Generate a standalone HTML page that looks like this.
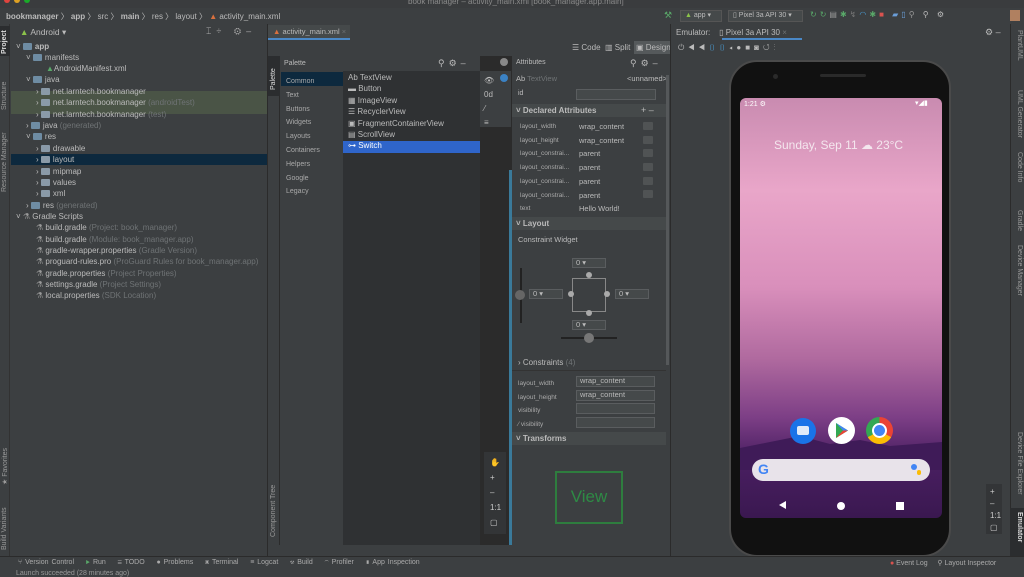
<!DOCTYPE html>
<html><head><meta charset="utf-8"><style>
*{margin:0;padding:0;box-sizing:border-box}
body{width:1024px;height:576px;overflow:hidden;background:#3c3f41;font-family:"Liberation Sans",sans-serif;font-size:8px;color:#bbbbbb;position:relative}
.a{position:absolute;white-space:nowrap}
.row{position:absolute;height:11px;line-height:11px;white-space:nowrap}
.fold{display:inline-block;width:9px;height:7px;background:#6e8ca3;border-radius:1px;vertical-align:-1px;margin-right:3px}
.g{color:#6f7375}
.vt{position:absolute;transform:rotate(-90deg);transform-origin:left top;white-space:nowrap;font-size:7px;color:#9a9a9a}
.vtr{position:absolute;transform:rotate(90deg);transform-origin:left top;white-space:nowrap;font-size:7px;color:#9a9a9a}
.dd{position:absolute;height:10px;border:1px solid #5a5d5f;background:#45494a;font-size:7.5px;line-height:8px;padding-left:3px}
.ar{position:absolute;width:10px;height:8px;background:#505354;border-radius:1px}
</style></head><body>
<!-- title -->
<div class="a" style="left:0;top:0;width:1024px;height:8px;background:#3a3c3e"></div>
<div class="a" style="left:408;left:408px;top:-3px;font-size:8px;color:#8a8a8a">book manager – activity_main.xml [book_manager.app.main]</div>
<div class="a" style="left:4px;top:-3px;width:6px;height:6px;border-radius:3px;background:#e0443e"></div>
<div class="a" style="left:14px;top:-3px;width:6px;height:6px;border-radius:3px;background:#dea123"></div>
<div class="a" style="left:24px;top:-3px;width:6px;height:6px;border-radius:3px;background:#1aab29"></div>
<!-- breadcrumb -->
<div class="a" style="left:6px;top:11px;font-size:8px;color:#bbb"><b>bookmanager</b> 〉 <b>app</b> 〉 src 〉 <b>main</b> 〉 res 〉 layout 〉 <span style="color:#d9703e">▲</span> activity_main.xml</div>
<!-- top right toolbar -->
<div class="a" style="left:664px;top:10px;color:#59a869;font-size:9px">⚒</div>
<div class="a" style="left:680px;top:10px;width:42px;height:12px;border:1px solid #555;background:#45494a;font-size:7px;line-height:10px;padding-left:4px"><span style="color:#8bc34a">▲</span> app ▾</div>
<div class="a" style="left:728px;top:10px;width:75px;height:12px;border:1px solid #555;background:#45494a;font-size:7px;line-height:10px;padding-left:4px">▯ Pixel 3a API 30 ▾</div>
<div class="a" style="left:810px;top:10px;font-size:8px;letter-spacing:3px"><span style="color:#59a869">↻↻</span><span style="color:#999">▤</span><span style="color:#59a869">✱</span><span style="color:#777">↯</span><span style="color:#4a9ed8">◠</span><span style="color:#59a869">✱</span><span style="color:#d9534f">■</span> <span style="color:#6a9ed8">▰▯</span><span style="color:#999">⚲</span> <span style="color:#bbb">⚲ ⚙</span></div>
<div class="a" style="left:1010px;top:10px;width:10px;height:11px;background:#b08060"></div>
<!-- left strip -->
<div class="a" style="left:0;top:24px;width:10px;height:532px;background:#3c3f41;border-right:1px solid #323232"></div>
<div class="a" style="left:0;top:26px;width:10px;height:30px;background:#2b2d2f"></div>
<div class="vt" style="left:1px;top:54px;color:#ddd;font-weight:bold">Project</div>
<div class="vt" style="left:1px;top:110px">Structure</div>
<div class="vt" style="left:1px;top:192px">Resource Manager</div>
<div class="vt" style="left:1px;top:485px">★ Favorites</div>
<div class="vt" style="left:1px;top:550px">Build Variants</div>
<!-- project panel -->
<div class="a" style="left:11px;top:24px;width:256px;height:532px;background:#3c3f41"></div>
<div class="a" style="left:20px;top:27px;font-size:8.5px;color:#bbb"><span style="color:#8bc34a">▲</span> Android ▾</div>
<div class="a" style="left:206px;top:26px;font-size:9px;color:#aaa;letter-spacing:5px">⌶÷ ⚙–</div>
<div class="a" style="left:11px;top:91px;width:256px;height:23px;background:#4a5446"></div>
<div class="a" style="left:11px;top:154px;width:256px;height:11px;background:#0d293e"></div>
<div class="row" style="left:16px;top:41px">˅ <span class="fold"></span><b>app</b></div>
<div class="row" style="left:26px;top:52px">˅ <span class="fold"></span>manifests</div>
<div class="row" style="left:46px;top:63px"><span style="color:#59a869">▲</span>AndroidManifest.xml</div>
<div class="row" style="left:26px;top:74px">˅ <span class="fold"></span>java</div>
<div class="row" style="left:36px;top:86px">› <span class="fold" style="background:#8a9aa8"></span>net.larntech.bookmanager</div>
<div class="row" style="left:36px;top:97px">› <span class="fold" style="background:#8a9aa8"></span>net.larntech.bookmanager <span class="g">(androidTest)</span></div>
<div class="row" style="left:36px;top:109px">› <span class="fold" style="background:#8a9aa8"></span>net.larntech.bookmanager <span class="g">(test)</span></div>
<div class="row" style="left:26px;top:120px">› <span class="fold"></span>java <span class="g">(generated)</span></div>
<div class="row" style="left:26px;top:131px">˅ <span class="fold"></span>res</div>
<div class="row" style="left:36px;top:143px">› <span class="fold" style="background:#8a9aa8"></span>drawable</div>
<div class="row" style="left:36px;top:154px">› <span class="fold" style="background:#8a9aa8"></span>layout</div>
<div class="row" style="left:36px;top:166px">› <span class="fold" style="background:#8a9aa8"></span>mipmap</div>
<div class="row" style="left:36px;top:177px">› <span class="fold" style="background:#8a9aa8"></span>values</div>
<div class="row" style="left:36px;top:188px">› <span class="fold" style="background:#8a9aa8"></span>xml</div>
<div class="row" style="left:26px;top:200px">› <span class="fold"></span>res <span class="g">(generated)</span></div>
<div class="row" style="left:16px;top:211px">˅ <span style="color:#999">⚗</span> Gradle Scripts</div>
<div class="row" style="left:36px;top:222px"><span style="color:#999">⚗</span> build.gradle <span class="g">(Project: book_manager)</span></div>
<div class="row" style="left:36px;top:234px"><span style="color:#999">⚗</span> build.gradle <span class="g">(Module: book_manager.app)</span></div>
<div class="row" style="left:36px;top:245px"><span style="color:#999">⚗</span> gradle-wrapper.properties <span class="g">(Gradle Version)</span></div>
<div class="row" style="left:36px;top:256px"><span style="color:#999">⚗</span> proguard-rules.pro <span class="g">(ProGuard Rules for book_manager.app)</span></div>
<div class="row" style="left:36px;top:268px"><span style="color:#999">⚗</span> gradle.properties <span class="g">(Project Properties)</span></div>
<div class="row" style="left:36px;top:279px"><span style="color:#999">⚗</span> settings.gradle <span class="g">(Project Settings)</span></div>
<div class="row" style="left:36px;top:290px"><span style="color:#999">⚗</span> local.properties <span class="g">(SDK Location)</span></div>
<!-- editor -->
<div class="a" style="left:267px;top:24px;width:401px;height:532px;background:#3c3f41;border-left:1px solid #2b2b2b"></div>
<div class="a" style="left:268px;top:25px;width:82px;height:15px;background:#45494a;border-bottom:2px solid #4a88c7;font-size:7.5px;line-height:13px;padding-left:5px"><span style="color:#d9703e">▲</span> activity_main.xml <span class="g">×</span></div>
<div class="a" style="left:572px;top:43px;font-size:8px;color:#bbb">☰ Code &nbsp;▥ Split</div>
<div class="a" style="left:634px;top:41px;width:36px;height:13px;background:#55595b;font-size:8px;line-height:13px;padding-left:2px;color:#bbb">▣ Design</div>
<!-- palette -->
<div class="a" style="left:268px;top:56px;width:12px;height:489px;background:#3c3f41;border-right:1px solid #2b2b2b"></div>
<div class="a" style="left:268px;top:56px;width:12px;height:40px;background:#2b2d2f"></div>
<div class="vt" style="left:270px;top:90px;color:#ddd">Palette</div>
<div class="vt" style="left:270px;top:537px">Component Tree</div>
<div class="a" style="left:281px;top:56px;width:199px;height:489px;background:#2f3133"></div>
<div class="a" style="left:281px;top:56px;width:199px;height:15px;background:#3c3f41"></div>
<div class="a" style="left:284px;top:60px;font-size:7px">Palette</div>
<div class="a" style="left:438px;top:58px;font-size:9px;color:#bbb;letter-spacing:4px">⚲⚙–</div>
<div class="a" style="left:281px;top:71px;width:62px;height:474px;background:#3c3f41"></div>
<div class="a" style="left:281px;top:72px;width:62px;height:14px;background:#0d293e"></div>
<div class="a" style="left:286px;top:75px;font-size:7px;line-height:13.8px;color:#aaa">Common<br>Text<br>Buttons<br>Widgets<br>Layouts<br>Containers<br>Helpers<br>Google<br>Legacy</div>
<div class="a" style="left:343px;top:141px;width:137px;height:12px;background:#2f65ca"></div>
<div class="a" style="left:348px;top:72px;font-size:8px;line-height:11.4px;color:#bbb">Ab TextView<br>▬ Button<br>▦ ImageView<br>☰ RecyclerView<br>▣ FragmentContainerView<br>▤ ScrollView<br><span style="color:#fff">⊶ Switch</span></div>
<!-- toolbar strip -->
<div class="a" style="left:480px;top:56px;width:32px;height:489px;background:#2b2b2b"></div>
<div class="a" style="left:480px;top:71px;width:31px;height:56px;background:#3c3f41"></div>
<div class="a" style="left:484px;top:74px;font-size:8px;line-height:14px;color:#bbb">👁<br>0d<br>⁄<br>≡</div>
<div class="a" style="left:500px;top:74px;width:8px;height:8px;border-radius:4px;background:#3b82c4"></div>
<div class="a" style="left:500px;top:58px;width:8px;height:8px;border-radius:4px;background:#888"></div>
<div class="a" style="left:509px;top:170px;width:3px;height:375px;background:#3a7a9a"></div>
<div class="a" style="left:484px;top:452px;width:22px;height:82px;background:#333537"></div>
<div class="a" style="left:490px;top:455px;font-size:8px;line-height:15px;color:#ccc">✋<br>+<br>–<br>1:1<br>▢</div>
<!-- attributes -->
<div class="a" style="left:512px;top:56px;width:156px;height:489px;background:#3c3f41"></div>
<div class="a" style="left:516px;top:59px;font-size:7px">Attributes</div>
<div class="a" style="left:630px;top:58px;font-size:9px;letter-spacing:4px">⚲⚙–</div>
<div class="a" style="left:516px;top:74px;font-size:7.5px">Ab <span class="g">TextView</span></div>
<div class="a" style="left:627px;top:74px;font-size:7.5px">&lt;unnamed&gt;</div>
<div class="a" style="left:518px;top:90px;font-size:7px">id</div>
<div class="a" style="left:576px;top:89px;width:80px;height:11px;border:1px solid #5a5d5f;background:#45494a"></div>
<div class="a" style="left:512px;top:104px;width:154px;height:13px;background:#45494a"></div>
<div class="a" style="left:516px;top:106px;font-size:8px;font-weight:bold">˅ Declared Attributes</div>
<div class="a" style="left:641px;top:105px;font-size:9px">+ –</div>
<div class="a" style="left:520px;top:120px;font-size:6.5px;line-height:13.7px;color:#aaa">layout_width<br>layout_height<br>layout_constrai...<br>layout_constrai...<br>layout_constrai...<br>layout_constrai...<br>text</div>
<div class="a" style="left:579px;top:120px;font-size:7.5px;line-height:13.7px">wrap_content<br>wrap_content<br>parent<br>parent<br>parent<br>parent<br>Hello World!</div>
<div class="ar" style="left:643px;top:122px"></div><div class="ar" style="left:643px;top:136px"></div><div class="ar" style="left:643px;top:149px"></div><div class="ar" style="left:643px;top:163px"></div><div class="ar" style="left:643px;top:177px"></div><div class="ar" style="left:643px;top:190px"></div>
<div class="a" style="left:666px;top:75px;width:3px;height:290px;background:#55585a"></div>
<div class="a" style="left:512px;top:217px;width:154px;height:13px;background:#45494a"></div>
<div class="a" style="left:516px;top:219px;font-size:8px;font-weight:bold">˅ Layout</div>
<div class="a" style="left:518px;top:235px;font-size:7.5px">Constraint Widget</div>
<!-- constraint widget -->
<div class="a" style="left:572px;top:278px;width:34px;height:34px;border:1px solid #888"></div>
<div class="dd" style="left:572px;top:258px;width:34px">0 ▾</div>
<div class="dd" style="left:572px;top:320px;width:34px">0 ▾</div>
<div class="dd" style="left:529px;top:289px;width:34px">0 ▾</div>
<div class="dd" style="left:615px;top:289px;width:34px">0 ▾</div>
<div class="a" style="left:520px;top:268px;width:2px;height:55px;background:#222"></div>
<div class="a" style="left:515px;top:290px;width:10px;height:10px;border-radius:5px;background:#666"></div>
<div class="a" style="left:561px;top:337px;width:56px;height:2px;background:#222"></div>
<div class="a" style="left:584px;top:333px;width:10px;height:10px;border-radius:5px;background:#777"></div>
<div class="a" style="left:586px;top:272px;width:6px;height:6px;border-radius:3px;background:#aaa"></div>
<div class="a" style="left:586px;top:310px;width:6px;height:6px;border-radius:3px;background:#aaa"></div>
<div class="a" style="left:568px;top:291px;width:6px;height:6px;border-radius:3px;background:#aaa"></div>
<div class="a" style="left:604px;top:291px;width:6px;height:6px;border-radius:3px;background:#aaa"></div>
<div class="a" style="left:518px;top:358px;font-size:8px">› Constraints <span class="g">(4)</span></div>
<div class="a" style="left:512px;top:370px;width:154px;height:1px;background:#333"></div>
<div class="a" style="left:518px;top:377px;font-size:6.5px;line-height:13.7px;color:#aaa">layout_width<br>layout_height<br>visibility<br>⁄ visibility</div>
<div class="dd" style="left:576px;top:376px;width:79px;height:11px">wrap_content</div>
<div class="dd" style="left:576px;top:390px;width:79px;height:11px">wrap_content</div>
<div class="dd" style="left:576px;top:403px;width:79px;height:11px"></div>
<div class="dd" style="left:576px;top:417px;width:79px;height:11px"></div>
<div class="a" style="left:512px;top:432px;width:154px;height:13px;background:#45494a"></div>
<div class="a" style="left:516px;top:434px;font-size:8px;font-weight:bold">˅ Transforms</div>
<div class="a" style="left:555px;top:471px;width:68px;height:53px;border:2px solid #2e7d3e;color:#2e8a45;font-size:17px;text-align:center;line-height:48px">View</div>
<!-- emulator -->
<div class="a" style="left:670px;top:24px;width:340px;height:532px;background:#3c3f41;border-left:1px solid #2b2b2b"></div>
<div class="a" style="left:676px;top:28px;font-size:8px;color:#bbb">Emulator: &nbsp;&nbsp;&nbsp;▯ Pixel 3a API 30 <span class="g">×</span></div>
<div class="a" style="left:722px;top:38px;width:80px;height:2px;background:#4a88c7"></div>
<div class="a" style="left:985px;top:27px;font-size:9px">⚙ –</div>
<div class="a" style="left:678px;top:43px;font-size:8px;letter-spacing:4px;color:#bbb">⏻◀◀<span style="color:#4a9ed8">▯▯</span>◂●■◙↺⋮</div>
<!-- phone -->
<div class="a" style="left:729px;top:60px;width:222px;height:497px;border-radius:28px;background:#111;border:2px solid #4a4a4a"></div>
<div class="a" style="left:820px;top:74px;width:46px;height:3px;border-radius:2px;background:#2a2a2a"></div>
<div class="a" style="left:773px;top:74px;width:5px;height:5px;border-radius:3px;background:#2a2a2a"></div>
<div class="a" style="left:740px;top:98px;width:202px;height:420px;border-radius:6px;background:linear-gradient(180deg,#c98bb0 0%,#e9a6c9 22%,#d98fbb 45%,#b06a9f 62%,#7d3f86 76%,#4a1f62 86%,#3a1850 100%)"></div>
<svg class="a" style="left:740px;top:430px" width="202" height="40"><path d="M0 18 L30 12 L60 6 L90 14 L120 10 L150 16 L202 12 L202 40 L0 40Z" fill="#3f1b58"/></svg>
<div class="a" style="left:744px;top:100px;font-size:7px;color:#fff">1:21 ⚙</div>
<div class="a" style="left:915px;top:99px;font-size:7px;color:#fff">▾◢▮</div>
<div class="a" style="left:774px;top:138px;font-size:12px;color:#f4e6ee">Sunday, Sep 11 ☁ 23°C</div>
<div class="a" style="left:790px;top:418px;width:26px;height:26px;border-radius:13px;background:#1a73e8"></div>
<div class="a" style="left:797px;top:426px;width:12px;height:9px;background:#e0eaf8;border-radius:2px"></div>
<div class="a" style="left:828px;top:417px;width:27px;height:27px;border-radius:14px;background:#fff"></div>
<svg class="a" style="left:834px;top:422px" width="16" height="17"><path d="M2 1 L14 8.5 L2 16Z" fill="#34a853"/><path d="M2 1 L9 8.5 L14 8.5Z" fill="#4285f4"/><path d="M2 16 L9 8.5 L14 8.5Z" fill="#ea4335"/></svg>
<div class="a" style="left:866px;top:417px;width:27px;height:27px;border-radius:14px;background:conic-gradient(#ea4335 0 120deg,#fbbc05 120deg 240deg,#34a853 240deg 360deg)"></div>
<div class="a" style="left:872px;top:423px;width:15px;height:15px;border-radius:8px;background:#fff"></div>
<div class="a" style="left:874px;top:425px;width:11px;height:11px;border-radius:6px;background:#4285f4"></div>
<div class="a" style="left:752px;top:459px;width:178px;height:22px;border-radius:11px;background:#e8e3ea"></div>
<div class="a" style="left:758px;top:461px;font-size:14px;font-weight:bold;color:#4285f4">G</div>
<div class="a" style="left:911px;top:464px;width:6px;height:6px;border-radius:3px;background:#4285f4"></div>
<div class="a" style="left:917px;top:470px;width:4px;height:5px;border-radius:2px;background:#fbbc05"></div>
<svg class="a" style="left:778px;top:500px" width="10" height="10"><path d="M8 1 L1 5 L8 9Z" fill="#fff"/></svg>
<div class="a" style="left:837px;top:502px;width:8px;height:8px;border-radius:4px;background:#fff"></div>
<div class="a" style="left:896px;top:502px;width:8px;height:8px;background:#fff"></div>
<div class="a" style="left:986px;top:484px;width:16px;height:50px;background:#333537"></div>
<div class="a" style="left:990px;top:486px;font-size:8px;line-height:12px;color:#ccc">+<br>–<br>1:1<br>▢</div>
<!-- right strip -->
<div class="a" style="left:1010px;top:24px;width:14px;height:532px;background:#3c3f41;border-left:1px solid #2b2b2b"></div>
<div class="vtr" style="left:1023px;top:30px">PlantUML</div>
<div class="vtr" style="left:1023px;top:90px">UML Generator</div>
<div class="vtr" style="left:1023px;top:152px">Code Info</div>
<div class="vtr" style="left:1023px;top:210px">Gradle</div>
<div class="vtr" style="left:1023px;top:245px">Device Manager</div>
<div class="vtr" style="left:1023px;top:432px">Device File Explorer</div>
<div class="a" style="left:1010px;top:508px;width:14px;height:48px;background:#2b2d2f"></div>
<div class="vtr" style="left:1023px;top:512px;color:#ddd;font-weight:bold">Emulator</div>
<!-- bottom -->
<div class="a" style="left:0;top:556px;width:1024px;height:20px;background:#3c3f41;border-top:1px solid #2b2b2b"></div>
<div class="a" style="left:18px;top:559px;font-size:7px;color:#aaa;word-spacing:1px">⑂ Version Control &nbsp;&nbsp; <span style="color:#59a869">▶</span> Run &nbsp;&nbsp; ☰ TODO &nbsp;&nbsp; ● Problems &nbsp;&nbsp; ▣ Terminal &nbsp;&nbsp; ≡ Logcat &nbsp;&nbsp; ⚒ Build &nbsp;&nbsp; ◠ Profiler &nbsp;&nbsp; ▮ App Inspection</div>
<div class="a" style="left:890px;top:559px;font-size:7px;color:#aaa"><span style="color:#d9534f">●</span> Event Log &nbsp;&nbsp;&nbsp; ⚲ Layout Inspector</div>
<div class="a" style="left:16px;top:570px;font-size:7px;color:#999">Launch succeeded (28 minutes ago)</div>
</body></html>
